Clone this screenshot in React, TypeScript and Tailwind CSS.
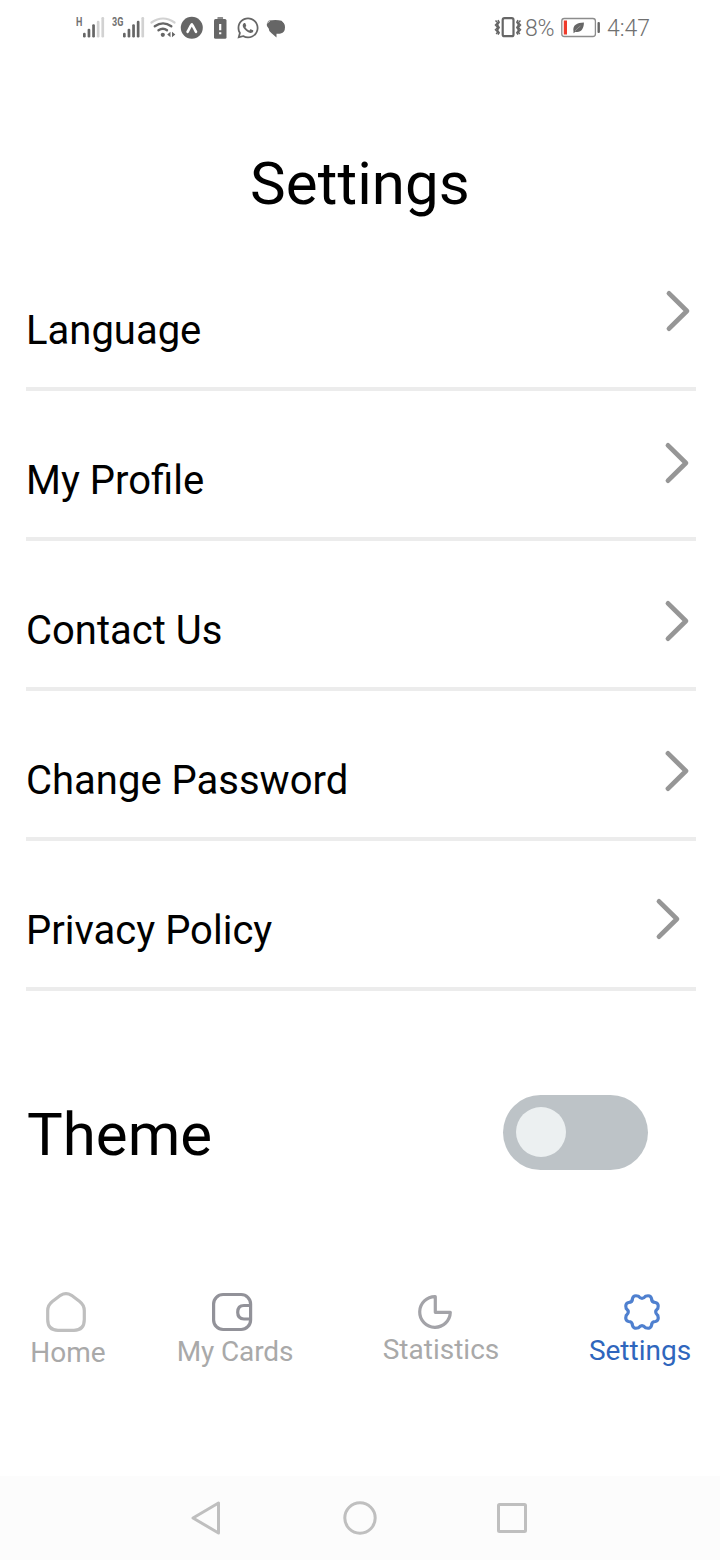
import type { ReactNode } from "react";
import { FaWhatsapp } from "react-icons/fa";

const rows = [
  { label: "Language", chevron: "pt-[49px] pr-[5px]" },
  { label: "My Profile", chevron: "pt-[51px] pr-[6px]" },
  { label: "Contact Us", chevron: "pt-[59px] pr-[6px]" },
  { label: "Change Password", chevron: "pt-[59px] pr-[6px]" },
  { label: "Privacy Policy", chevron: "pt-[57px] pr-[15px]" },
];

function Chevron() {
  return (
    <svg width="26" height="42" viewBox="0 0 26 42" fill="none" stroke="#969696" strokeWidth="4.800" strokeLinecap="round" strokeLinejoin="round">
      <path d="M4 3.400 21.900 21 4 38.600" />
    </svg>
  );
}

function Signal({ bars, className }: { bars: number; className: string }) {
  const tops = [15.7, 11.7, 7.3, 3.7, 0];
  return (
    <svg className={className} width="22" height="21" viewBox="0 0 22 21">
      {tops.map((y, i) => (
        <rect key={y} x={i * 4.6} y={y} width="2.7" height={20.4 - y} rx="1.2" fill={i < bars ? "#666" : "#d2d2d2"} />
      ))}
    </svg>
  );
}

function StatusBar() {
  return (
    <header className="flex h-14 w-full items-start text-[#707070]">
      <span className="mt-[15px] ml-[76px] w-[7px] origin-left scale-x-75 text-[12px] leading-[14px] font-bold">H</span>
      <Signal bars={3} className="mt-[17px]" />
      <span className="mt-[15px] ml-[7px] w-[11px] origin-left scale-x-75 text-[12px] leading-[14px] font-bold">3G</span>
      <Signal bars={4} className="mt-[17px]" />
      <svg className="mt-4 ml-1" width="28" height="24" viewBox="149 16 28 24" fill="none" strokeLinecap="round">
        <path d="M151.500 22.500Q163 14.500 174.500 22.500" stroke="#d2d2d2" strokeWidth="2.200" />
        <path d="M154.800 26.200Q163 20.500 171.300 26.200" stroke="#666" strokeWidth="2.400" />
        <path d="M158.500 30.300Q163 27 167 30.300" stroke="#666" strokeWidth="2.400" />
        <circle cx="162.800" cy="34.800" r="2.100" fill="#666" />
        <path d="M170.500 31.800v5.500l-3.300-2.700zM172 31.800v5.500l3.300-2.700z" fill="#666" />
      </svg>
      <svg className="mt-4 ml-[3px]" width="24" height="24" viewBox="180 16 24 24">
        <circle cx="191.800" cy="27.800" r="11" fill="#666" />
        <path d="M187.600 31.800C189 29.500 190.300 26 191.800 24.300C193.300 26 194.600 29.500 196 31.800" fill="none" stroke="#fff" strokeWidth="2.600" strokeLinecap="round" strokeLinejoin="round" />
      </svg>
      <svg className="mt-4 ml-[9px]" width="15" height="24" viewBox="213 16 15 24">
        <rect x="214" y="19" width="12.500" height="19.700" rx="1.500" fill="#666" />
        <rect x="217.400" y="17.200" width="5.700" height="1.500" rx=".5" fill="#666" />
        <path d="M220.200 24v6.200M220.200 32.300v2" stroke="#fff" strokeWidth="2.200" />
      </svg>
      <FaWhatsapp className="mt-4 ml-[8px]" size={24} color="#666" />
      <svg className="mt-4 ml-[5px]" width="22" height="24" viewBox="265 16 22 24">
        <path d="M269 20.400q8-1 12.500.3 3.500 2 3.500 6.500 0 5.200-4.300 6.400-2 .4-4.200.2v3.700l-5.200-4.500q-2.500-1.500-2.600-4.500-2.500-1.800-1.900-4.500.5-2.500 2.200-3.600z" fill="#666" />
        <path d="M267 23.600q1.200-1.800 3-2.600M284.800 24q-1-2-2.500-2.800" fill="none" stroke="#fff" strokeWidth=".7" />
      </svg>
      <svg className="mt-4 ml-[207px]" width="28" height="24" viewBox="494 16 28 24" fill="none" stroke="#666">
        <rect x="502.700" y="18.200" width="10.800" height="18" rx="1.800" strokeWidth="2.200" />
        <path d="M495.500 20.500l2.200 2.300-2.200 2.300 2.200 2.300-2.200 2.300 2.200 2.300-1.500 2M498 20l1.200 2.300-1.700 2.600 1.700 2.600-1.700 2.600 1.700 2.600-1.200 2M520.500 20.500l-2.200 2.300 2.200 2.300-2.200 2.300 2.200 2.300-2.200 2.300 1.500 2M518 20l-1.200 2.300 1.700 2.600-1.700 2.600 1.700 2.600-1.700 2.600 1.200 2" strokeWidth="1.500" />
      </svg>
      <span className="mt-[17px] ml-[3px] w-[36px] text-[23px] leading-6 font-light tracking-[-0.2px] whitespace-nowrap">8%</span>
      <svg className="mt-4 ml-[-1px]" width="42" height="24" viewBox="560 16 42 24">
        <rect x="561.800" y="18.500" width="33.600" height="18" rx="2.500" fill="none" stroke="#8c8c8c" strokeWidth="1.300" />
        <rect x="563.800" y="20.500" width="3.200" height="14" fill="#ef3b2c" />
        <path d="M573.500 31.500C572.300 25 577 22.800 583.900 22.500C584 28.500 581 33 575.500 31.800L573.500 33.200z" fill="#666" />
        <path d="M575 31q3-3.500 5.500-5" fill="none" stroke="#bbb" strokeWidth=".5" />
        <rect x="597.500" y="21.900" width="2.400" height="11.200" rx="1" fill="#666" />
      </svg>
      <span className="mt-[17px] ml-[5px] text-[23px] leading-6 font-light whitespace-nowrap">4:47</span>
    </header>
  );
}

function Tab({ label, className, children }: { label: string; className: string; children: ReactNode }) {
  return (
    <button className={`flex flex-col items-center text-[28px] leading-8 whitespace-nowrap ${className}`}>
      {children}
      <span className="pt-px">{label}</span>
    </button>
  );
}

function TabBar() {
  return (
    <nav className="flex h-[186px] w-full items-start text-[#a9a9a9]">
      <Tab label="Home" className="ml-[18px] w-[100px]">
        <svg className="mt-px mr-1 mb-[3px]" width="42" height="42" viewBox="45 1291 42 42" fill="none" stroke="#bfbfbf" strokeWidth="3.200">
          <path d="M60.500 1295.300Q66 1291.800 71.500 1295.300L79.700 1301.400Q84.300 1305 84.300 1310.500V1319.500Q84.300 1330.300 74 1330.300H58Q47.700 1330.300 47.700 1319.500V1310.500Q47.700 1305 52.300 1301.400Z" />
        </svg>
      </Tab>
      <Tab label="My Cards" className="ml-[52px] w-[130px] tracking-[-0.15px]">
        <svg className="mt-px mr-[6px] mb-[2px]" width="42" height="42" viewBox="211 1291 42 42" fill="none" stroke="#929299" strokeWidth="3.200">
          <rect x="213.600" y="1294.500" width="37" height="35" rx="9.500" />
          <path d="M250.500 1305.500H244Q237.700 1305.500 237.700 1312.300Q237.700 1319 244 1319H250.500" />
        </svg>
      </Tab>
      <Tab label="Statistics" className="ml-[76px] w-[130px]">
        <svg className="mt-px mr-3" width="38" height="42" viewBox="416 1291 38 42" fill="none" stroke="#a3a3a8" strokeWidth="3.200" strokeLinejoin="round">
          <path d="M435.300 1296.700V1312.300H450.300A15.300 15.300 0 1 1 435.300 1296.700Z" />
        </svg>
      </Tab>
      <Tab label="Settings" className="ml-[69px] w-[130px] text-[#2f66bd]">
        <svg className="mt-px mb-px ml-1" width="42" height="42" viewBox="-21 -21 42 42" fill="none" stroke="#4f80cf" strokeWidth="3.200" strokeLinejoin="round">
          <path d="M-3.500-15.800Q0-11.600 3.500-15.800Q8.500-17.300 9.500-13.500Q9.500-9.500 13.500-9.500Q17.300-8.500 15.800-3.500Q11.600 0 15.800 3.500Q17.300 8.500 13.500 9.500Q9.500 9.500 9.500 13.500Q8.500 17.300 3.500 15.800Q0 11.600-3.500 15.800Q-8.500 17.300-9.500 13.500Q-9.500 9.500-13.500 9.500Q-17.300 8.500-15.800 3.500Q-11.600 0-15.800-3.500Q-17.300-8.500-13.500-9.500Q-9.500-9.500-9.500-13.500Q-8.500-17.300-3.500-15.800Z" />
        </svg>
      </Tab>
    </nav>
  );
}

export default function App() {
  return (
    <div className="flex h-[1560px] w-[720px] flex-col overflow-hidden bg-white font-[Roboto,sans-serif] text-black">
      <StatusBar />
      <h1 className="h-[185px] pt-[93px] text-center text-[60px] leading-[70px] font-normal tracking-[0.1px]">Settings</h1>
      <main className="flex flex-col">
        {rows.map((row) => (
          <div key={row.label} className="mr-6 ml-[26px] flex h-[150px] items-start justify-between border-b-4 border-[#ececec]">
            <span className="pt-[66px] text-[40px] leading-[48px]">{row.label}</span>
            <span className={row.chevron}>
              <Chevron />
            </span>
          </div>
        ))}
        <section className="flex h-[299px] items-start justify-between pr-[72px] pl-[27px]">
          <h2 className="pt-[109px] text-[60px] leading-[70px] font-normal">Theme</h2>
          <button role="switch" aria-checked="false" aria-label="Theme" className="mt-[103.500px] flex h-[75px] w-[145px] items-center rounded-full bg-[#bdc3c7] pl-[12.500px]">
            <span className="size-[50px] rounded-full bg-[#ecf0f1]" />
          </button>
        </section>
      </main>
      <TabBar />
      <footer className="flex h-[84px] items-center bg-[#fcfcfc]">
        <svg className="ml-[190px]" width="32" height="36" viewBox="190 1500 32 36" fill="none" stroke="#bfbfbf" strokeWidth="3" strokeLinejoin="round">
          <path d="M218.500 1503V1533L193 1518Z" />
        </svg>
        <svg className="ml-[120px]" width="36" height="36" viewBox="0 0 36 36" fill="none" stroke="#bfbfbf" strokeWidth="3">
          <circle cx="18" cy="18" r="15.200" />
        </svg>
        <svg className="ml-[116px]" width="36" height="36" viewBox="0 0 36 36" fill="none" stroke="#bfbfbf" strokeWidth="3">
          <rect x="4.500" y="4.500" width="27" height="27" rx="1" />
        </svg>
      </footer>
    </div>
  );
}
